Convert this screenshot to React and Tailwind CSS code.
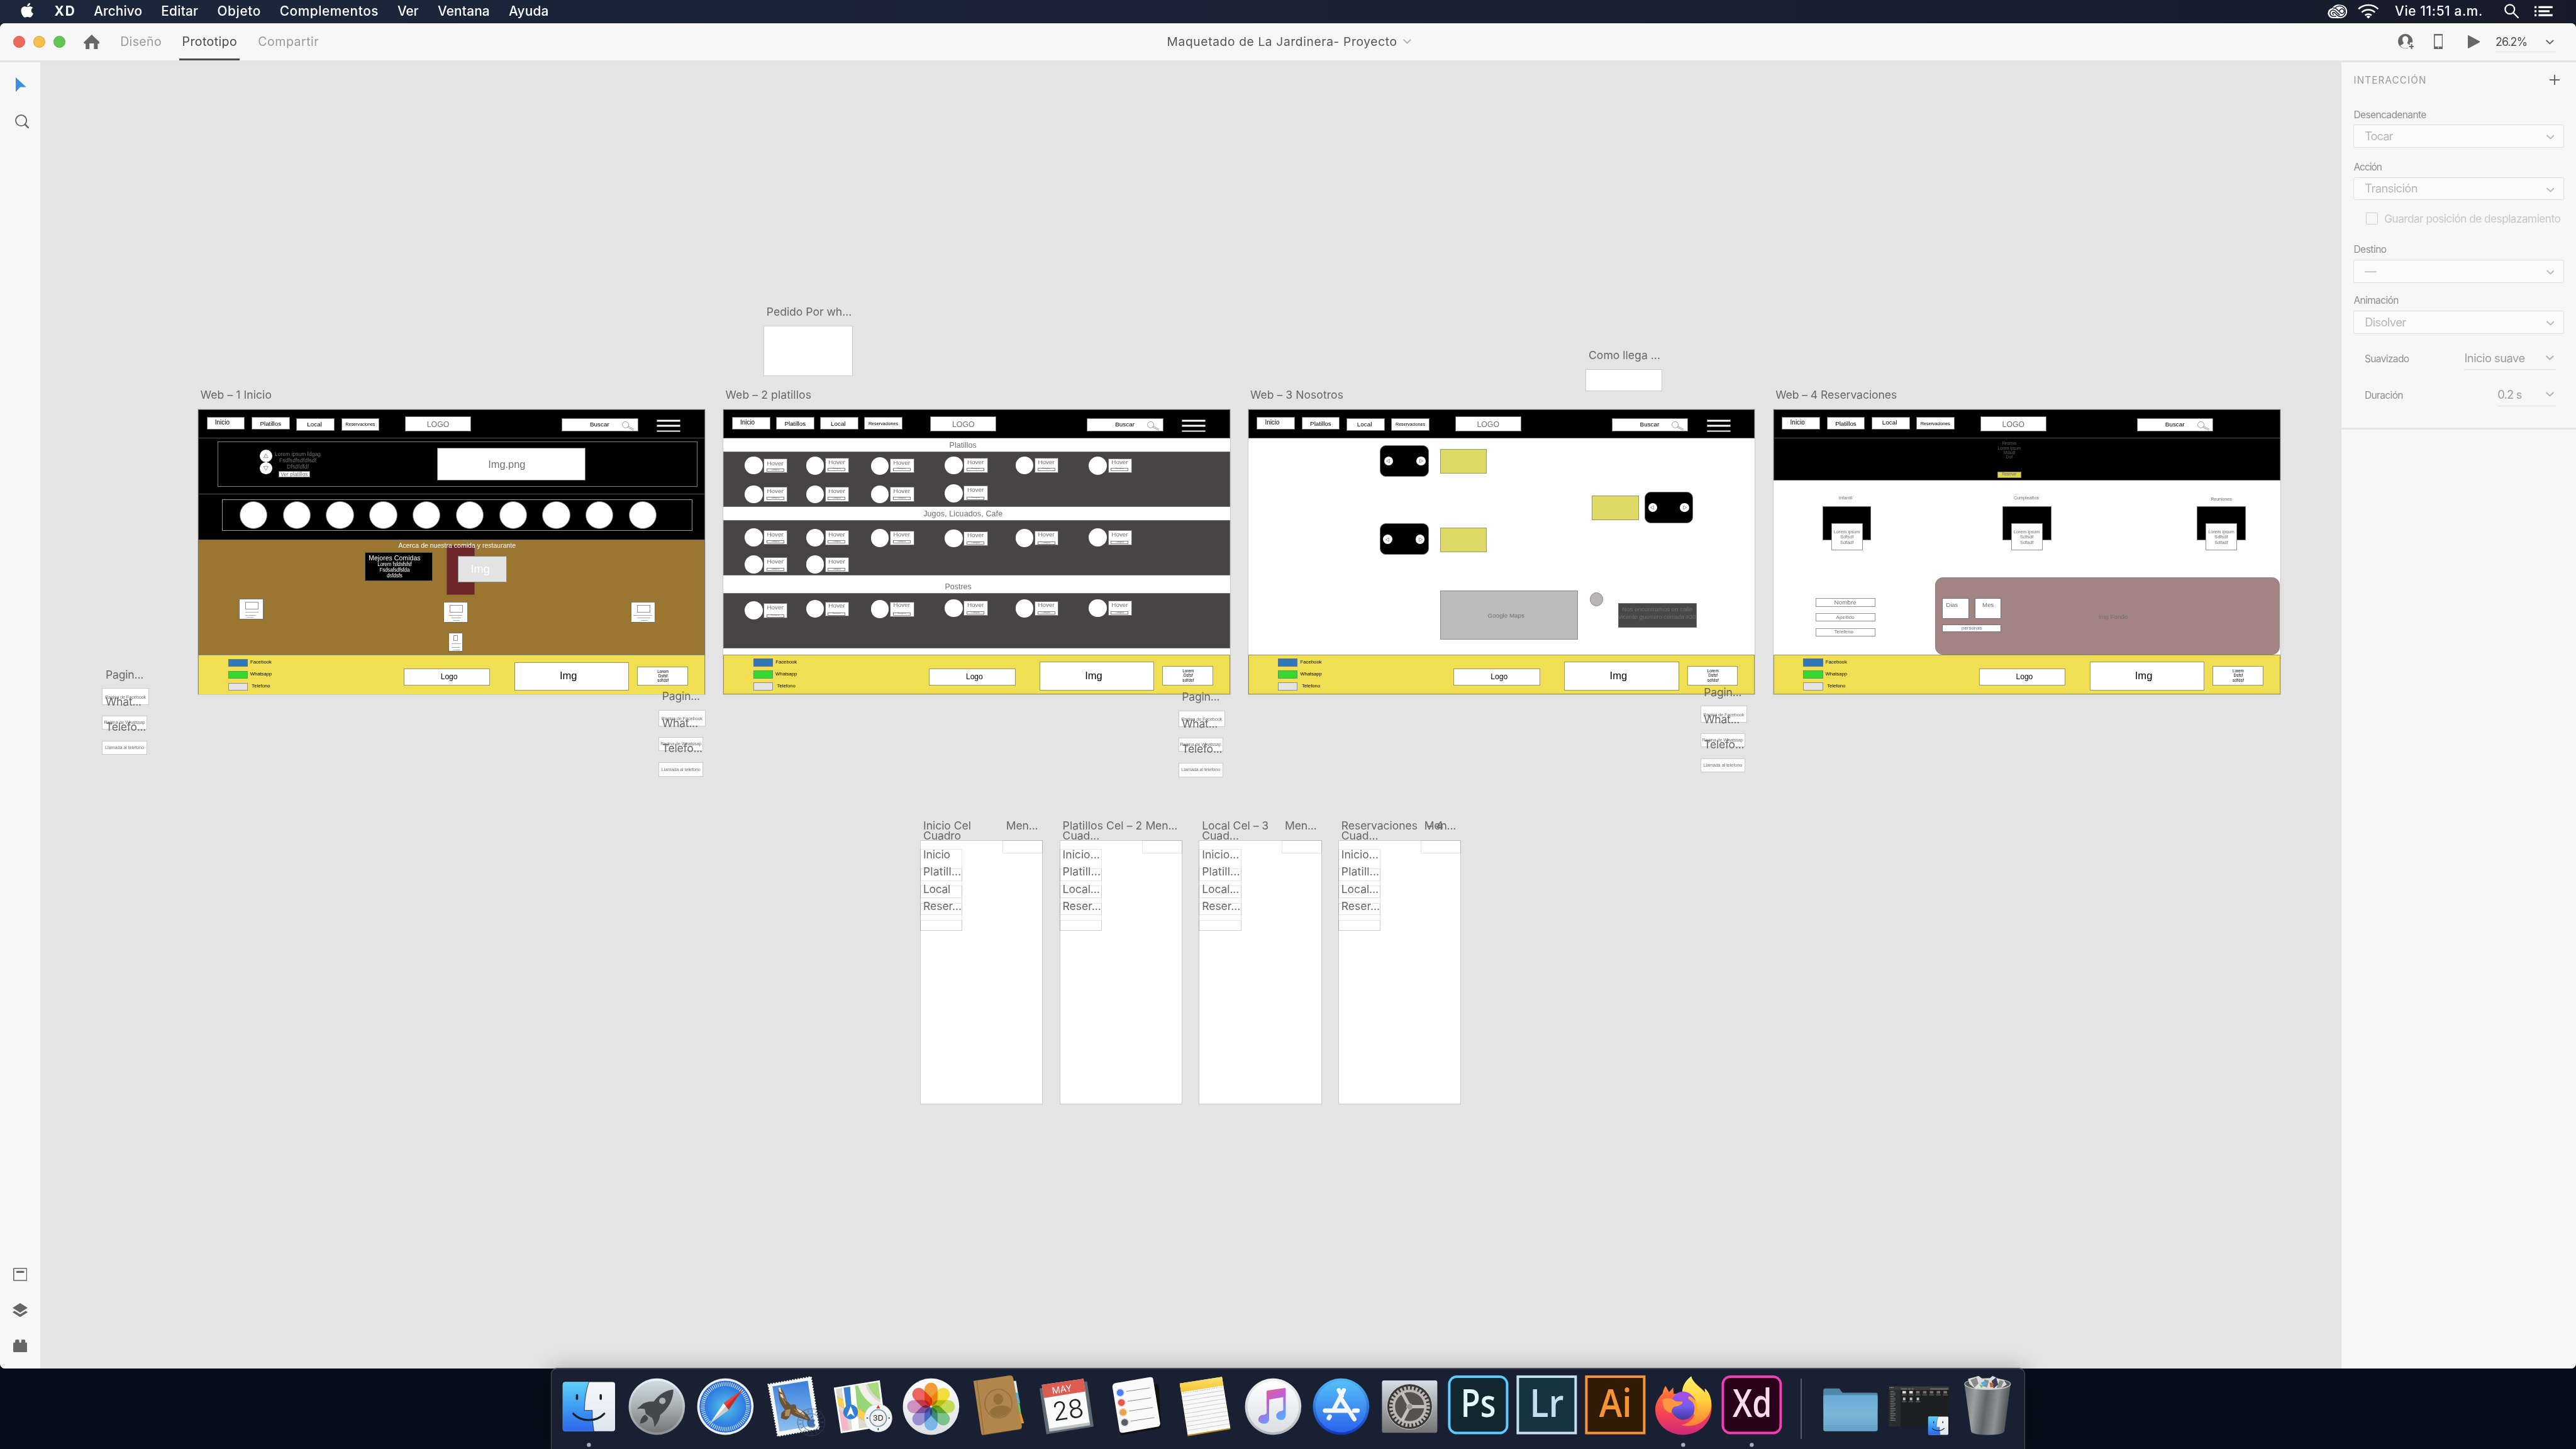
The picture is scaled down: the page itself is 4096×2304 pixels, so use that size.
import React from "react";
import { FaApple } from "react-icons/fa";

/* ---------- text helpers ---------- */

const SANS = '"Inter", sans-serif';
const ARIAL = '"Liberation Sans", Arial, sans-serif';
const ctx = document.createElement("canvas").getContext("2d");

function tracking(text, size, width, family, weight) {
  if (!width || text.length < 2) return 0;
  ctx.font = `${weight} ${size}px ${family}`;
  return (width - ctx.measureText(text).width) / (text.length - 1);
}

/* UI text that takes exactly `w` pixels in the flow */
function Label({ children, w, size = 24, weight = 400, className = "" }) {
  return (
    <span
      className={`block shrink-0 whitespace-nowrap leading-none ${className}`}
      style={{ width: w, fontSize: size, fontWeight: weight, letterSpacing: tracking(children, size, w, SANS, weight) }}
    >
      {children}
    </span>
  );
}

/* Wireframe text in the flow */
function Copy({ w, s, children, className = "text-[#707070]" }) {
  return (
    <span
      className={`block shrink-0 whitespace-nowrap font-['Liberation_Sans',Arial,sans-serif] leading-none ${className}`}
      style={{ width: w, fontSize: s, letterSpacing: tracking(children, s, w, ARIAL, 400) }}
    >
      {children}
    </span>
  );
}

/* Wireframe text on the free canvas, centred on x and y */
function Txt({ x, y, w, s, children, className = "text-[#707070]" }) {
  const ls = tracking(children, s, w, ARIAL, 400);
  return (
    <span
      className={`absolute whitespace-nowrap font-['Liberation_Sans',Arial,sans-serif] leading-none -translate-x-1/2 -translate-y-1/2 ${className}`}
      style={{ left: x + ls / 2, top: y, fontSize: s, letterSpacing: ls }}
    >
      {children}
    </span>
  );
}

/* Artboard name, left edge at x, centred on y */
function Name({ x, y, w, children }) {
  return (
    <span
      className="absolute whitespace-nowrap leading-none text-[#666] -translate-y-1/2"
      style={{ left: x, top: y, fontSize: 22, letterSpacing: tracking(children, 22, w, SANS, 400) }}
    >
      {children}
    </span>
  );
}

function Box({ x, y, w, h, className = "border border-[#707070] bg-white", children }) {
  return (
    <div className={`absolute ${className}`} style={{ left: x, top: y, width: w, height: h }}>
      {children}
    </div>
  );
}

function Disc({ x, y, r, className = "bg-white" }) {
  return <div className={`absolute rounded-full ${className}`} style={{ left: x - r, top: y - r, width: 2 * r, height: 2 * r }} />;
}

function Chevron({ className = "text-[#b0b0b0]" }) {
  return (
    <svg viewBox="0 0 16 10" className={`h-[10px] w-[16px] shrink-0 ${className}`} fill="none" stroke="currentColor" strokeWidth="2.6" strokeLinecap="round">
      <path d="M1.5 2 8 8l6.500-6" />
    </svg>
  );
}

/* ---------- artboards ---------- */

function Artboard({ x, children }) {
  return (
    <div className="absolute top-[690px] flex h-[566.5px] w-[1007px] flex-col bg-white outline-2 outline-[#c8c8c8]" style={{ left: x }}>
      {children}
    </div>
  );
}

const navBtn = "flex h-[24.5px] w-[76px] shrink-0 items-center justify-center border border-[#707070] bg-white";

function NavBar({ group = "w-[343.5px]", low = [true, true], localText = "", burger = true }) {
  return (
    <nav className="flex h-[57px] shrink-0 items-start border border-[#555] bg-black pl-[15.5px] pt-[12.5px]">
      <div className="w-[394.5px] pt-[1.5px]">
        <div className={`flex items-start justify-between ${group}`}>
          <div className={`${navBtn} pb-[2px] pr-[14px]`}><Copy w={29} s={12.5} className="text-black">Inicio</Copy></div>
          <div className={`${navBtn} pt-[3px]`}><Copy w={42} s={12.3} className="text-black">Platillos</Copy></div>
          <div className={`${navBtn} pr-[4px] ${low[0] ? "mt-[2px]" : ""} ${localText}`}><Copy w={29.5} s={12.3} className="text-black">Local</Copy></div>
          <div className={`${navBtn} ${low[1] ? "mt-[2px]" : ""}`}><Copy w={59} s={9.1} className="text-black">Reservaciones</Copy></div>
        </div>
      </div>
      <div className="flex h-[30px] w-[131px] items-center justify-center border border-[#707070] bg-white pt-[2px]">
        <Copy w={44.5} s={15.4}>LOGO</Copy>
      </div>
      <div className="ml-[180px] mt-[4px] flex h-[26px] w-[152px] items-center border border-[#707070] bg-white pl-[55px]">
        <Copy w={38.5} s={12.4} className="-mt-[2px] text-black">Buscar</Copy>
        <svg viewBox="0 0 26 20" className="ml-[25px] mt-[3px] h-[20px] w-[26px]" fill="none" stroke="#707070" strokeWidth=".9">
          <circle cx="7" cy="8" r="6.2" />
          <path d="M11 13 23 19M12.500 11 24 17" />
        </svg>
      </div>
      {burger && (
        <div className="ml-[37px] mt-[6px] flex flex-col gap-[5.9px]">
          <i className="h-[4.6px] w-[47.5px] border border-[#777] bg-white" />
          <i className="h-[4.6px] w-[47.5px] border border-[#777] bg-white" />
          <i className="h-[4.6px] w-[47.5px] border border-[#777] bg-white" />
        </div>
      )}
    </nav>
  );
}

function Social({ children, w, swatch }) {
  return (
    <div className="flex items-center">
      <i className={`h-[15.5px] w-[39px] border ${swatch}`} />
      <div className="-mt-[3px] ml-[5px] flex w-[43px] justify-center"><Copy w={w} s={9.6} className="text-black">{children}</Copy></div>
    </div>
  );
}

const plate = "flex shrink-0 items-center justify-center border border-[#9a9466] bg-white";

function Footer() {
  return (
    <footer className="mt-auto flex h-[79.5px] shrink-0 items-start border border-[#9a9358] bg-[#f0df52] pl-[58px]">
      <div className="flex w-[349px] flex-col gap-[8.3px] pt-[7px]">
        <Social w={42.5} swatch="border-[#707070]/70 bg-[#3278b8]">Facebook</Social>
        <Social w={43} swatch="border-[#707070]/60 bg-[#37d931]">Whatsapp</Social>
        <Social w={36.5} swatch="border-[#909090] bg-[#e3e3e3]">Telefono</Social>
      </div>
      <div className={`${plate} mt-[26px] h-[34px] w-[172px] pl-[9px]`}><Copy w={33.5} s={15.2} className="text-black">Logo</Copy></div>
      <div className={`${plate} ml-[48px] mt-[13px] h-[57px] w-[228px] pr-[13px]`}><Copy w={34.5} s={20.7} className="text-black">Img</Copy></div>
      <div className={`${plate} ml-[16px] mt-[22px] h-[38px] w-[101px] flex-col gap-px pl-[2px]`}>
        <Copy w={22.5} s={8} className="text-black">Lorem</Copy>
        <Copy w={18.5} s={8} className="text-black">Dsfsf</Copy>
        <Copy w={22.5} s={8} className="text-black">sdfdsf</Copy>
      </div>
    </footer>
  );
}

function Card({ x, y, w, h, pic, lines }) {
  return (
    <Box x={x} y={y} w={w} h={h} className="border border-[#707070] bg-white">
      <Box x={pic[0] - x - 1} y={pic[1] - y - 1} w={pic[2]} h={pic[3]} className="border border-[#909090]" />
      {lines.map(([lx, ly, lw]) => (
        <Box key={ly} x={lx - x - 1} y={ly - y - 1} w={lw} h={1.3} className="bg-[#a8a8a8]" />
      ))}
    </Box>
  );
}

function BoardInicio() {
  return (
    <Artboard x={314}>
      <NavBar />
      <section className="h-[112px] shrink-0 border-x border-b border-[#555] bg-black pl-[37.5px] pt-[6px]">
        <div className="flex h-[90px] w-[953px] items-start border border-[#808080] pl-[82.3px]">
          <div className="mt-[15.5px] flex flex-col">
            <div className="flex size-[24.6px] items-center justify-center rounded-full bg-white">
              <svg viewBox="0 0 12 12" className="size-[12px]" fill="none" stroke="#707070" strokeWidth=".9"><path d="M6 2 10.500 9.800H1.500Z" /></svg>
            </div>
            <div className="flex size-[24.6px] items-center justify-center rounded-full bg-white">
              <svg viewBox="0 0 12 12" className="size-[12px]" fill="none" stroke="#707070" strokeWidth=".9"><path d="M6 10 10.500 2.200H1.500Z" /></svg>
            </div>
          </div>
          <div className="ml-[4.5px] mt-[19.5px] flex w-[93px] flex-col items-center gap-[1.9px]">
            <Copy w={91} s={10.6}>Lorem ipsum fdgag</Copy>
            <Copy w={74} s={10.6}>Fsdfsdfsdfdfsdf</Copy>
            <Copy w={44} s={10.6}>Dfsdfdfdf</Copy>
            <div className="mt-px -ml-[14px] flex h-[13px] w-[63px] items-center justify-center border border-[#707070] bg-white"><Copy w={54} s={10.4}>Ver platillos</Copy></div>
          </div>
          <div className="ml-[231px] mt-[11.5px] flex h-[65.5px] w-[294px] items-center justify-center border border-[#707070] bg-white pr-[18px]">
            <Copy w={74} s={20.5}>Img.png</Copy>
          </div>
        </div>
      </section>
      <section className="h-[90px] shrink-0 border-x border-[#555] bg-black pl-[46.5px] pt-[10px]">
        <div className="flex h-[61.5px] w-[934.5px] items-center gap-[30.6px] border border-[#999] pl-[33.2px]">
          {Array.from({ length: 10 }, (_, i) => <i key={i} className="size-[55.4px] shrink-0 rounded-full border border-[#707070] bg-white" />)}
        </div>
      </section>
      <section className="h-[228.5px] shrink-0 border border-[#707070] bg-[#9a7631]">
        <Box x={494} y={270} w={56} h={98.5} className="border border-[#7a4a3a] bg-[#6e2527]" />
        <Txt x={514.5} y={271} w={233.5} s={13.1} className="text-white">Acerca de nuestra comida y restaurante</Txt>
        <Box x={331} y={283} w={134.5} h={58} className="flex flex-col items-center border border-[#606060] bg-black pr-[16px] pt-[5px]">
          <Copy w={103} s={13.1} className="text-white">Mejores Comidas</Copy>
          <Copy w={68} s={10.2} className="mt-px text-white">Lorem fsfdsfsfsf</Copy>
          <Copy w={60} s={10.2} className="mt-[1.3px] text-white">Fsdsafsdfsfda</Copy>
          <Copy w={31} s={10.2} className="mt-[1.6px] text-white">dsfdsfs</Copy>
        </Box>
        <Box x={516} y={290.5} w={98} h={53.5} className="flex items-center justify-center border border-[#888] bg-[#e3e3e3] pr-[9px]">
          <Copy w={38} s={22.7} className="text-white">Img</Copy>
        </Box>
        <Card x={81} y={376} w={49} h={41.5} pic={[92.8, 382, 26.5, 15.5]} lines={[[92.8, 402.5, 26.5], [92.8, 408, 22], [97.5, 412.5, 12]]} />
        <Card x={487.5} y={382} w={48} h={41.5} pic={[499.4, 388, 26, 15.5]} lines={[[496.7, 408, 28], [503.4, 412.7, 18.6], [507.4, 418, 12]]} />
        <Card x={860} y={382} w={48.6} h={41.5} pic={[872, 388, 26, 15.5]} lines={[[865, 408, 37], [872, 412.7, 26], [879.5, 418, 14]]} />
        <Card x={496.7} y={443} w={29} h={38.5} pic={[507.4, 448, 8.6, 11]} lines={[[503.4, 464.5, 18.6], [503.4, 472, 16], [507.4, 477, 12]]} />
      </section>
      <Footer />
    </Artboard>
  );
}

const colDisc = [60.1, 181.8, 310.9, 457.6, 598.2, 744.2];
const colCard = [79.1, 201.4, 330.5, 477.2, 617.8, 763.9];
/* column, disc centre, card top, "Hover" centre, "Comprar" centre */
const dishes = [
  [0, 111.1, 97.1, 107.5, 120.4], [1, 111.6, 96.6, 104.9, 118.8], [2, 112.1, 97.1, 105.9, 118.8],
  [3, 111.1, 96.1, 104.9, 118.8], [4, 111.1, 96.1, 104.9, 118.8], [5, 111.6, 97.1, 104.9, 118.8],
  [0, 168.4, 153.4, 162.2, 176.7], [1, 168.4, 153.4, 162.2, 176.7], [2, 168.4, 153.4, 162.2, 176.7], [3, 166.3, 151.4, 160.1, 176.2],
  [0, 254.2, 239.2, 248, 263], [1, 254.7, 240.2, 248, 263], [2, 255.2, 240.7, 249, 263],
  [3, 256.2, 241.8, 250, 265.5], [4, 255.2, 240.7, 249, 265.5], [5, 254.2, 239.7, 248, 264.5],
  [0, 307.9, 294, 302.2, 318.2], [1, 307.9, 294, 302.2, 318.2],
  [0, 399.3, 384.9, 393.1, 410.2], [1, 396.2, 381.8, 390, 406.6], [2, 396.8, 382.3, 389, 406.6],
  [3, 394.7, 380.2, 389, 404.5], [4, 395.2, 380.7, 389, 404.5], [5, 394.7, 380.2, 389, 404.5],
];

const band = "shrink-0 border border-[#707070] bg-[#464445]";

function BoardPlatillos() {
  return (
    <Artboard x={1358}>
      <NavBar group="w-[339px]" low={[false, false]} localText="pt-[3px]" />
      <div className="flex h-[26px] shrink-0 items-center justify-center pr-[55px] pt-[2px]"><Copy w={54} s={15.6}>Platillos</Copy></div>
      <div className={`h-[110px] ${band}`} />
      <div className="flex h-[26.5px] shrink-0 items-center justify-center pr-[55px] pt-[3px]"><Copy w={157.5} s={15.6}>Jugos, Licuados, Cafe</Copy></div>
      <div className={`h-[110.5px] ${band}`} />
      <div className="flex h-[34.5px] shrink-0 items-center justify-center pr-[74px] pt-[11px]"><Copy w={53} s={15.6}>Postres</Copy></div>
      <div className={`h-[110px] ${band}`} />
      {dishes.map(([c, cy, top, hy, by], i) => (
        <React.Fragment key={i}>
          <Disc x={colDisc[c]} y={cy} r={17.9} />
          <Box x={colCard[c]} y={top} w={48.5} h={29.5} />
          <Txt x={colCard[c] + 23.7} y={hy} w={33} s={12.4}>Hover</Txt>
          <Box x={colCard[c] + 6.2} y={by - 3} w={35} h={6} className="border border-[#808080]" />
          <Txt x={colCard[c] + 23.7} y={by} w={17.5} s={4.5}>Comprar</Txt>
        </React.Fragment>
      ))}
      <Footer />
    </Artboard>
  );
}

function Slider({ x, y, pad }) {
  return (
    <Box x={x} y={y} w={97} h={62} className={`flex items-center justify-between rounded-[12px] border border-[#707070] bg-black ${pad}`}>
      <div className="flex size-[18px] items-center justify-center rounded-full bg-white">
        <svg viewBox="0 0 10 10" className="-ml-[2px] size-[10px]" fill="none" stroke="#707070" strokeWidth=".9"><path d="M1.500 5 8 1.500v7Z" /></svg>
      </div>
      <div className="flex size-[18px] items-center justify-center rounded-full bg-white">
        <svg viewBox="0 0 10 10" className="ml-[2px] size-[10px]" fill="none" stroke="#707070" strokeWidth=".9"><path d="M8.500 5 2 1.500v7Z" /></svg>
      </div>
    </Box>
  );
}

function BoardNosotros() {
  return (
    <Artboard x={2401}>
      <NavBar />
      <Slider x={262} y={71.5} pad="pl-[7px] pr-[5.5px]" />
      <Box x={381} y={78.5} w={93} h={49} className="border border-[#99985c] bg-[#dddb66]" />
      <Slider x={787.5} y={164} pad="pl-[6px] pr-[7px]" />
      <Box x={683} y={171} w={93.5} h={48.5} className="border border-[#99985c] bg-[#dddb66]" />
      <Slider x={262} y={226} pad="pl-[5px] pr-[7px] pt-[2px]" />
      <Box x={381} y={234.5} w={93} h={48.5} className="border border-[#99985c] bg-[#dddb66]" />
      <Box x={381} y={360} w={274} h={97.5} className="flex items-center justify-center border border-[#8c8c8c] bg-[#bbb] pr-[11px] pt-[2px]">
        <Copy w={73} s={12.3}>Google Maps</Copy>
      </Box>
      <Disc x={692.2} y={377} r={13.5} className="border border-[#858585] bg-[#b9b5b4]" />
      <Box x={735} y={384.5} w={156} h={48.5} className="flex flex-col items-center gap-[2.6px] border border-[#707070] bg-[#474747] pt-[5px]">
        <Copy w={140.5} s={12.4}>Nos encontramos en calle</Copy>
        <Copy w={154} s={12.4}>vicente guerrero cerrada #30</Copy>
      </Box>
      <Footer />
    </Artboard>
  );
}

const field = "flex w-[118.5px] items-center justify-center border border-[#909090] bg-white";

function BoardReservaciones() {
  return (
    <Artboard x={3445}>
      <NavBar group="w-[343px]" low={[false, false]} localText="pb-[2px]" burger={false} />
      <section className="flex h-[84.5px] shrink-0 flex-col items-center gap-px border border-t-0 border-[#555] bg-black pr-[70px] pt-[7px]">
        <Copy w={28.5} s={8} className="text-[#606060]">Reserva</Copy>
        <Copy w={46} s={8} className="text-[#606060]">Lorem ipsum</Copy>
        <Copy w={24} s={8} className="text-[#606060]">Sfdsdf</Copy>
        <Copy w={13} s={8} className="text-[#606060]">Duf</Copy>
        <div className="mt-[23px] flex h-[12.5px] w-[48px] items-center justify-center border border-[#8c8745] bg-[#ddd352]"><Copy w={29} s={8}>Reservar</Copy></div>
      </section>
      <Txt x={143} y={176} w={27} s={9.1}>Infantil</Txt>
      <Txt x={502.6} y={176} w={50.5} s={9.1}>Cumpleaños</Txt>
      <Txt x={890} y={178} w={42} s={9.1}>Reuniones</Txt>
      {[97, 454.6, 841.3].map((x) => (
        <React.Fragment key={x}>
          <Box x={x} y={192.7} w={97.3} h={67} className="border border-[#707070] bg-black" />
          <Box x={x + 17.5} y={226} w={62.5} h={53.5} className="flex flex-col items-center gap-[1.2px] border border-[#909090] bg-white pt-[11.5px]">
            <Copy w={52} s={9.1}>Lorem ipsum</Copy>
            <Copy w={26.5} s={9.1}>Sdfsdf</Copy>
            <Copy w={26.5} s={9.1}>Sdfadf</Copy>
          </Box>
        </React.Fragment>
      ))}
      <Box x={83.5} y={374.7} w={118.5} h={76} className="flex flex-col justify-between">
        <div className={`${field} h-[17px]`}><Copy w={44} s={12.3}>Nombre</Copy></div>
        <div className={`${field} h-[17px] pt-[2px]`}><Copy w={36.5} s={10}>Apellido</Copy></div>
        <div className={`${field} h-[16.5px] pr-[6px]`}><Copy w={38} s={9.9}>Telefeno</Copy></div>
      </Box>
      <Box x={320.7} y={333.5} w={686} h={153.5} className="rounded-[15px] border border-[#8d8382] bg-[#a38482]" />
      <Box x={335.6} y={375} w={53} h={41.5} className="border border-[#707070] bg-white pl-[6px] pt-[6px]"><Copy w={23.7} s={12.2}>Dias</Copy></Box>
      <Box x={399.8} y={375} w={53} h={41.5} className="border border-[#707070] bg-white pl-[14px] pt-[6px]"><Copy w={23} s={12}>Mes</Copy></Box>
      <Box x={335.6} y={427.5} w={117} h={15} className="flex items-center justify-center border border-[#707070] bg-white"><Copy w={40.6} s={9.7}>personas</Copy></Box>
      <Txt x={675} y={412.7} w={58} s={12.3}>Img Fondo</Txt>
      <Footer />
    </Artboard>
  );
}

function ContactBoards({ x, y }) {
  const frame = "flex items-center justify-center border-2 border-[#cacaca] bg-white";
  return (
    <div className="absolute flex flex-col" style={{ left: x, top: y }}>
      <div className={`h-[33px] w-[93px] pt-[2px] ${frame}`}><Copy w={81.5} s={9.4}>Pagina de Facebook</Copy></div>
      <div className={`mt-[21px] h-[28px] w-[89px] ${frame}`}><Copy w={81.5} s={9.2}>Pagina de Whatssap</Copy></div>
      <div className={`mt-[22px] h-[28.5px] w-[89px] ${frame}`}><Copy w={77.5} s={9.2}>Llamada al telefono</Copy></div>
      <Name x={7} y={-27} w={75.5}>Pagin...</Name>
      <Name x={7} y={27} w={71.5}>What...</Name>
      <Name x={7} y={77} w={80.5}>Telefo...</Name>
    </div>
  );
}

function PhoneBoard({ x, title, titleW, sub, subW, items, extra }) {
  return (
    <div className="absolute top-[1545.5px]" style={{ left: x }}>
      <Name x={6} y={-28} w={titleW}>{title}</Name>
      {extra && <Name x={176.5} y={-28} w={32}>{extra}</Name>}
      <Name x={6} y={-8.5} w={subW}>{sub}</Name>
      <Name x={170.8} y={-28} w={63.5}>Men...</Name>
      <Box x={0} y={0} w={244} h={526} className="border-2 border-[#cbcbcb] bg-white" />
      <Box x={164} y={0} w={80} h={27} className="border-2 border-black/10" />
      <Box x={0} y={18} w={84} h={163} className="border-2 border-black/10" />
      {[57, 91, 125, 159].map((y, i) => (
        <Box key={y} x={0} y={y} w={84} h={i === 3 ? 22 : 24.5} className="border-2 border-black/10" />
      ))}
      {items.map(([t, w], i) => (
        <Name key={t} x={6} y={29.5 + i * 34} w={w}>{t}</Name>
      ))}
    </div>
  );
}

const phoneItems = [["Inicio...", 74], ["Platill...", 75.5], ["Local...", 74], ["Reser...", 76.5]];

function Canvas() {
  return (
    <main className="relative flex-1 overflow-hidden bg-[#e4e4e4]">
      <Name x={318.5} y={660.5} w={141.5}>Web – 1 Inicio</Name>
      <Name x={1362} y={660.5} w={170.5}>Web – 2 platillos</Name>
      <Name x={2405} y={660.5} w={185}>Web – 3 Nosotros</Name>
      <Name x={3449} y={660.5} w={241.5}>Web – 4 Reservaciones</Name>
      <Name x={1443.5} y={495.5} w={169.5}>Pedido Por wh...</Name>
      <Box x={1437} y={523} w={178} h={101} className="border-2 border-[#cbcbcb] bg-white" />
      <Name x={3077.5} y={582.5} w={142.5}>Como llega ...</Name>
      <Box x={3071.5} y={610} w={152} h={43.5} className="border-2 border-[#cbcbcb] bg-white" />
      <BoardInicio />
      <BoardPlatillos />
      <BoardNosotros />
      <BoardReservaciones />
      <ContactBoards x={123} y={1244} />
      <ContactBoards x={1229} y={1287} />
      <ContactBoards x={2262} y={1288} />
      <ContactBoards x={3299.5} y={1279} />
      <PhoneBoard x={1749} title="Inicio Cel" titleW={95} sub="Cuadro" subW={75} items={[["Inicio", 54], ["Platill...", 75.5], ["Local", 54], ["Reser...", 76.5]]} />
      <PhoneBoard x={2026} title="Platillos Cel – 2" titleW={158.5} sub="Cuad..." subW={73.5} items={phoneItems} />
      <PhoneBoard x={2303} title="Local Cel – 3" titleW={132.5} sub="Cuad..." subW={73.5} items={phoneItems} />
      <PhoneBoard x={2580} title="Reservaciones" titleW={151.5} extra="– 4" sub="Cuad..." subW={73.5} items={phoneItems} />
    </main>
  );
}

/* ---------- system menu bar ---------- */

function MenuBar() {
  return (
    <header className="flex h-[46px] shrink-0 items-center bg-linear-to-r from-[#1c273e] to-[#161c2c] text-white">
      <FaApple className="-mt-[5px] ml-[38px] size-[33px] shrink-0" />
      <nav className="ml-[37px] flex items-center gap-[38px] pb-px">
        <Label w={40.5} size={26} weight={700}>XD</Label>
        <Label w={96} size={26} weight={500}>Archivo</Label>
        <Label w={73.5} size={26} weight={500}>Editar</Label>
        <Label w={86} size={26} weight={500}>Objeto</Label>
        <Label w={196} size={26} weight={500}>Complementos</Label>
        <Label w={42} size={26} weight={500}>Ver</Label>
        <Label w={103.5} size={26} weight={500}>Ventana</Label>
        <Label w={79} size={26} weight={500}>Ayuda</Label>
      </nav>
      <div className="ml-auto flex items-center pb-px pr-[46px]">
        <svg viewBox="0 0 39 28" className="h-[28px] w-[39px]">
          <path fill="#fff" d="M10.500 27.500A10 10 0 0 1 9 7.600 14.500 14.500 0 0 1 24.500.5C33 .5 39 6.500 39 14S33 27.500 25.500 27.500Z" />
          <g fill="none" stroke="#171d2e" strokeWidth="1.900" strokeLinecap="round">
            <path d="M16.500 23.800H11a6.300 6.300 0 1 1 4.500-10.700l8 7.700" />
            <path d="M11.500 7.200c3-.3 5 .8 7 2.700l8 7.600a4.500 4.500 0 1 0-1-7.300c-.8.700-1.500 1.500-2 2.300" />
            <path d="M15.500 6.300C18 4 21 3.200 24 3.200c6.500 0 11.500 4.500 11.500 10.500S31 24.300 25.500 24.300c-2.500 0-4-.8-5.500-2.300l-6-5.500a2.200 2.200 0 1 0-2.500 3.400" />
          </g>
        </svg>
        <svg viewBox="0 0 42 30" className="ml-[21px] h-[30px] w-[42px]" fill="none" stroke="#fff" strokeWidth="3.200">
          <path d="M1.500 10.500a28 28 0 0 1 39 0M8 17a19 19 0 0 1 26 0M14.500 23a10 10 0 0 1 13 0" />
          <path d="m21 29.500-4-4a6 6 0 0 1 8 0Z" fill="#fff" stroke="none" />
        </svg>
        <Label w={174} size={26} weight={500} className="ml-[32px]">Vie 11:51 a.m.</Label>
        <svg viewBox="0 0 29 29" className="ml-[44px] size-[29px]" fill="none" stroke="#fff" strokeWidth="2.800">
          <circle cx="11" cy="11" r="9.300" />
          <path d="m18 18 9.500 9.500" strokeLinecap="round" />
        </svg>
        <svg viewBox="0 0 36 22" className="ml-[31px] h-[22px] w-[36px]" fill="#fff">
          <path d="M0 1h4v4H0zM0 9h4v4H0zM0 17h4v4H0zM8 1h28v4H8zM8 9h22v4H8zM8 17h28v4H8z" />
        </svg>
      </div>
    </header>
  );
}

/* ---------- application window ---------- */

function TitleBar() {
  return (
    <div className="grid h-[78px] shrink-0 grid-cols-[1fr_auto_1fr] items-stretch border-b-4 border-[#e3e3e3] bg-[#f7f7f7]">
      <div className="flex items-center">
        <div className="ml-[26px] flex gap-[16px]">
          <i className="size-[24px] rounded-full border border-[#d9574c] bg-[#ee6a5f]" />
          <i className="size-[24px] rounded-full border border-[#dba33a] bg-[#f5bf4f]" />
          <i className="size-[24px] rounded-full border border-[#4fae40] bg-[#62c655]" />
        </div>
        <svg viewBox="0 0 32 29" className="ml-[36px] h-[29px] w-[32px]" fill="#666">
          <path d="M16 0 32 15.500 30.500 18H28v11h-7.500V17.500h-9V29H4V18H1.500L0 15.500Z" />
        </svg>
        <Label w={82} size={24.5} className="ml-[41px] text-[#999]">Diseño</Label>
        <div className="ml-[35px] flex h-full items-center border-b-4 border-[#4b4b4b] pt-[4px] pl-[6px] pr-[5px]">
          <Label w={109} size={24.5} className="text-[#4b4b4b]">Prototipo</Label>
        </div>
        <Label w={120.5} size={24.5} className="ml-[37px] text-[#999]">Compartir</Label>
      </div>
      <div className="flex items-center gap-[12px] pl-[4px]">
        <Label w={457} size={24} className="text-[#555]">Maquetado de La Jardinera- Proyecto</Label>
        <Chevron />
      </div>
      <div className="flex items-center justify-end pr-[40px]">
        <svg viewBox="0 0 32 31" className="h-[31px] w-[32px]">
          <circle cx="14.500" cy="14.500" r="14.500" fill="#666" />
          <path fill="#f7f7f7" d="M14.500 4.500c4 0 6 3 6 6.500 0 3-1.200 4.500-2 6-.3 1.500.5 2.300 2.500 3.200v6.500a13 13 0 0 1-13.500-.5c-1-.8-2.500-2-3-3 .8-1.300 3.500-2.200 5-3 1.800-1 2-1.700 1.500-3-1-1.500-2.300-3-2.300-6.200 0-3.500 2-6.500 5.800-6.500Z" />
          <path stroke="#f7f7f7" strokeWidth="7" d="M27 17v14M20 25h12" />
          <path stroke="#666" strokeWidth="2.600" d="M27 20v10M22 25h10" />
        </svg>
        <svg viewBox="0 0 18 30" className="ml-[39px] h-[30px] w-[18px]">
          <path fill="#666" fillRule="evenodd" d="M1.500 0h15A1.500 1.500 0 0 1 18 1.500v27a1.500 1.500 0 0 1-1.500 1.500h-15A1.500 1.500 0 0 1 0 28.500v-27A1.500 1.500 0 0 1 1.500 0ZM2 3v22h14V3Zm6 23v2h2v-2Z" />
        </svg>
        <svg viewBox="0 0 24 26" className="ml-[50px] h-[26px] w-[24px]">
          <path fill="#666" d="M1.500.2 23.500 12a1.200 1.200 0 0 1 0 2L1.500 25.800A1 1 0 0 1 0 25V1A1 1 0 0 1 1.500.2Z" />
        </svg>
        <div className="ml-[31px] flex h-[42px] w-[120px] items-center justify-between border-b-2 border-[#e1e1e1] pr-[4px] pt-[2px]">
          <Label w={64} size={22.5} className="text-[#4b4b4b]">26.2%</Label>
          <Chevron className="text-[#666]" />
        </div>
      </div>
    </div>
  );
}

function ToolBar() {
  return (
    <aside className="flex w-[80px] shrink-0 flex-col bg-[#f7f7f7]">
      <svg viewBox="0 0 21 29" className="ml-[31px] mt-[30px] h-[29px] w-[21px]"><path fill="#3f8fe0" d="M0 0 21 19.500H9L0 29Z" /></svg>
      <svg viewBox="0 0 28 28" className="ml-[30px] mt-[44px] size-[28px]" fill="none" stroke="#666" strokeWidth="2.400">
        <circle cx="12" cy="12" r="10.700" />
        <path d="m20 20 6.500 6.500" strokeWidth="3.200" strokeLinecap="round" />
      </svg>
      <div className="mb-[32px] mt-auto flex flex-col items-center">
        <svg viewBox="0 0 28 26" className="h-[26px] w-[28px]" fill="none" stroke="#666">
          <rect x="1" y="1" width="26" height="24" rx="1" strokeWidth="2" />
          <path d="M8 8h12" strokeWidth="4" strokeLinecap="round" />
        </svg>
        <svg viewBox="0 0 30 28" className="mt-[44px] h-[28px] w-[30px]" fill="#666">
          <path d="M15 0 30 9.500 15 19 0 9.500ZM3.800 15.300 15 22.300l11.200-7L30 18 15 28 0 18Z" />
        </svg>
        <svg viewBox="0 0 28 25" className="mt-[45px] h-[25px] w-[28px]" fill="#666">
          <path d="M4 6V2a2 2 0 0 1 2-2h4a2 2 0 0 1 2 2v4h4V2a2 2 0 0 1 2-2h4a2 2 0 0 1 2 2v4h2a2 2 0 0 1 2 2v15a2 2 0 0 1-2 2H2a2 2 0 0 1-2-2V8a2 2 0 0 1 2-2Z" />
        </svg>
      </div>
    </aside>
  );
}

function Select({ children, w }) {
  return (
    <div className="flex h-[46px] w-[418px] items-center justify-between rounded-[4px] border-2 border-[#e0e0e0] bg-[#fbfbfb] pl-[21px] pr-[18px]">
      <Label w={w} size={23} className="-mt-px text-[#b6b6b6]">{children}</Label>
      <Chevron className="mt-[4px] text-[#bdbdbd]" />
    </div>
  );
}

function FieldName({ children, w, className = "" }) {
  return <Label w={w} size={19.5} className={`text-[#8e8e8e] ${className}`}>{children}</Label>;
}

function Inspector() {
  return (
    <aside className="w-[466px] shrink-0 bg-[#f7f7f7]">
      <div className="h-[730px] border-b-4 border-[#e5e5e5] pl-[24px] pr-[24px] pt-[25px]">
        <div className="flex h-[20px] items-center justify-between pr-[8px]">
          <Label w={144} size={19} className="text-[#999]">INTERACCIÓN</Label>
          <svg viewBox="0 0 20 20" className="size-[20px]" stroke="#666" strokeWidth="2.400"><path d="M10 0v20M0 10h20" /></svg>
        </div>
        <FieldName w={145} className="mb-[10px] mt-[49.5px]">Desencadenante</FieldName>
        <Select w={56.5}>Tocar</Select>
        <FieldName w={57} className="mb-[10.5px] mt-[28px]">Acción</FieldName>
        <Select w={105.5}>Transición</Select>
        <div className="mt-[24px] flex h-[24px] items-center pl-[24px]">
          <i className="size-[24px] rounded-[2px] border-2 border-[#ccc]" />
          <Label w={351} size={21.5} className="ml-[13px] text-[#c6c6c6]">Guardar posición de desplazamiento</Label>
        </div>
        <FieldName w={66} className="mb-[10.5px] mt-[40px]">Destino</FieldName>
        <Select w={22}>—</Select>
        <FieldName w={90} className="mb-[10.5px] mt-[26px]">Animación</FieldName>
        <Select w={82.5}>Disolver</Select>
        <div className="mt-[25.5px] flex h-[46px] items-center justify-between pl-[22px] pr-[16px]">
          <FieldName w={89} className="mt-[3px]">Suavizado</FieldName>
          <div className="flex h-full w-[182px] items-center justify-between border-b-2 border-[#e1e1e1] pr-[4px]">
            <Label w={121} size={23} className="text-[#9c9c9c]">Inicio suave</Label>
            <Chevron />
          </div>
        </div>
        <div className="mt-[26px] flex h-[46px] items-center justify-between pl-[22px] pr-[16px]">
          <FieldName w={77} className="mt-[3px]">Duración</FieldName>
          <div className="flex h-full w-[116px] items-center justify-between border-b-2 border-[#e1e1e1] pr-[4px]">
            <Label w={49} size={23} className="text-[#9c9c9c]">0.2 s</Label>
            <Chevron />
          </div>
        </div>
      </div>
    </aside>
  );
}

/* ---------- dock ---------- */

function Grad({ id, stops, x2 = 0, y2 = 1 }) {
  return (
    <linearGradient id={id} x1="0" y1="0" x2={x2} y2={y2}>
      {stops.map((c, i) => <stop key={i} offset={i / (stops.length - 1)} stopColor={c} />)}
    </linearGradient>
  );
}

function FinderFace() {
  return (
    <g>
      <rect x="16" y="28" width="104" height="98" rx="5" fill="url(#finderR)" />
      <path fill="url(#finderL)" d="M21 28H68C62 45 59.500 65 59 83.500c0 .5 0 .8.600.8H74.500C74.500 100 76 113 78 126H21a5 5 0 0 1-5-5V33a5 5 0 0 1 5-5Z" />
      <g fill="none" stroke="#15202c" strokeLinecap="round">
        <path strokeWidth="1.400" strokeOpacity=".7" d="M68 28C62 45 59.500 65 59 84.300H74.500C74.500 100 76 113 78 126" />
        <path strokeWidth="4.500" d="M44.300 54.500v7M91.500 54.500v7" />
        <path strokeWidth="4" d="M37 91c16 17 46 17 61.500 0" />
      </g>
    </g>
  );
}

const dockIcons = {
  finder: <FinderFace />,
  launchpad: (
    <g>
      <circle cx="68" cy="77" r="56" fill="url(#lpRing)" />
      <circle cx="68" cy="77" r="51.500" fill="url(#lpFill)" />
      <g fill="#45484a">
        <path d="M101 43C88 44 73 51 62 67c-9-1-18 2-22 4.500L28 82c6-1.500 11-1 16 0l2 9.500 10 6.500 2.500 1c3 5 4.500 12 4.500 18.500 6-6.500 11-15 11.500-24C91 81 101 62 101 43Z" />
        <path d="M45 93c-7 3-9.500 10-10.500 17.500C42 110 49 107 51 100c-1.500-3-3.500-5-6-7Z" />
      </g>
      <circle cx="79" cy="65.500" r="6.500" fill="#aab3b6" />
    </g>
  ),
  safari: (
    <g>
      <circle cx="68" cy="77" r="56" fill="#eceff2" />
      <circle cx="68" cy="77" r="51.500" fill="url(#sfFill)" />
      <circle cx="68" cy="77" r="45" fill="none" stroke="#fff" strokeOpacity=".85" strokeWidth="8" strokeDasharray="1.500 2.430" />
      <path fill="#e8453c" d="M102.700 42.300 64.400 70.300l5 6.500Z" />
      <path fill="#c32f29" d="M102.700 42.300 69 76.600l5.600 7.100Z" />
      <path fill="#f4f4f4" d="M36.400 112 64.400 70.300l5 6.500Z" />
      <path fill="#c8ccd0" d="M36.400 112 69 76.600l5.600 7.100Z" />
    </g>
  ),
  mail: (
    <g>
      <path fill="#f6f6f4" stroke="#f6f6f4" strokeWidth="3.500" strokeDasharray="0 5.500" strokeLinecap="round" d="m17 33 85-15 16 103-82 14.500Z" />
      <path fill="url(#mailSky)" d="m25.400 37 70-11.300 14.200 88.600-70.200 12.400Z" />
      <path fill="#6b5237" d="M37 39c4-1 8 4 10 9l4 9 3 9 8 8c4-2 8-2 10 1l1 5c7 2 15 6 21 12l7 10-3 3-7-2-13-4-10-4-6-4c-2 6-5 10-9 12l-6-1-5-2 1-10 7-7c-4-5-9-12-11-20-1-8-2-16-2-24Z" />
      <path fill="#e4d9c4" d="m37 39 4 0 3 11-5-3ZM40 51l5 2 3 8-6-3ZM72 80l11 5 8 9-12-5Z" />
      <path fill="#b08d5c" d="m51 84 10-2-2 14-9 0Z" />
      <path fill="none" stroke="#a58a62" strokeWidth="1.500" d="m43 46 9 20M43 58l9 14M68 82l24 15M71 88l24 13" />
      <g fill="none" stroke="#3c4c66" strokeOpacity=".55" strokeWidth="1.600">
        <circle cx="102.500" cy="108" r="27" /><circle cx="102.500" cy="108" r="17" />
        <circle cx="102.500" cy="108" r="22" strokeWidth="5" strokeDasharray="2 6" />
      </g>
      <path fill="#2d4e8c" fillOpacity=".7" d="M102 101c2-1 4-4 4-6-3 0-5 3-4 6Zm-8 6c0-5 4-6 8-4 4-2 8 0 8 2-4 2-3 7 1 8-2 5-4 7-9 5-5 2-8-4-8-11Z" />
    </g>
  ),
  maps: (
    <g>
      <path fill="#fff" d="m11 39.300 91.400-14.600L114 116l-89 14Z" />
      <clipPath id="mapClip"><path d="M15 42 99 28.500 110 113 28 126Z" /></clipPath>
      <g clipPath="url(#mapClip)">
        <path fill="#dcd9d0" d="M0 0h136v161H0z" />
        <path fill="#96d676" d="M48 20h20c4 34 20 50 50 60v46H96C70 112 48 70 48 20Z" />
        <path fill="#a6db80" d="M74 20h45v48C96 66 80 44 74 20Z" />
        <path fill="#f1efe8" d="M56 20h15c4 30 20 46 46 54v12C82 78 60 52 56 20Z" />
        <path fill="#f5b7c5" d="m17 80 18 10 8 40H22Z" />
        <path fill="#fff" d="m38 20 14 0 10 110H48Z" />
        <path fill="#fbd04f" stroke="#e3b23c" d="m14 55 50 28 60 44-8 10-56-40-46-27Z" />
        <path fill="#3b83d4" d="m28 20 14-2 5 70H37Z" />
        <path stroke="#fff" strokeWidth="3" d="m26 20 9 70M45 20l6 70" />
      </g>
      <circle cx="44.500" cy="87.700" r="14.500" fill="#2f7fd9" />
      <path fill="#fff" d="m44.500 76 8 21-8-6-8 6Z" />
      <circle cx="99.200" cy="99.700" r="27.500" fill="#f4f5f6" stroke="#d0d4d8" />
      <circle cx="99.200" cy="99.700" r="16.500" fill="none" stroke="#6c93ad" strokeWidth="2" />
      <path fill="#e0332a" d="m99.200 74 4 6.500h-8Z" />
      <path stroke="#222" strokeWidth="1.800" d="M76 99.700h3M119.500 99.700h3M99.200 120v4" />
      <text x="99.200" y="105.500" textAnchor="middle" fontSize="15.500" fill="#222" fontFamily="Inter, sans-serif">3D</text>
    </g>
  ),
  photos: (
    <g>
      <circle cx="68" cy="77" r="56" fill="url(#phFill)" />
      <g className="isolate">
        {["#f39c37", "#f2df3c", "#c4dc55", "#7cc08a", "#7ab6e8", "#9a8fd0", "#cf8fc0", "#ec6560"].map((c, i) => (
          <rect key={c} x="55" y="29.500" width="26" height="46" rx="13" fill={c} className="mix-blend-multiply" transform={`rotate(${i * 45} 68 77)`} />
        ))}
      </g>
    </g>
  ),
  contacts: (
    <g>
      <path fill="#e8e8e8" d="m96 26 6 0 4 24-8 1Z" /><path fill="#5cb4e4" d="m98 50 8-1 4 21-9 1Z" />
      <path fill="#62cb62" d="m101 71 8-1 3 20-8 1Z" /><path fill="#e8932b" d="m104 91 8-1 6 20-10 1Z" />
      <path fill="#6d4a1e" d="m22 34 70 80 22-2-1 10-76 12q-4 0-4-5Z" />
      <path fill="#b0864c" d="m17.300 26 72-11q6 0 7 5l17 96q0 5-5 6l-73 11q-2 0-2.500-3Z" />
      <path fill="none" stroke="#8f6a36" strokeWidth="1.500" d="m24 26 14 105" />
      <ellipse cx="67" cy="71" rx="27" ry="28.500" fill="none" stroke="#94703b" strokeWidth="2" transform="rotate(-8 67 71)" />
      <ellipse cx="66.500" cy="62" rx="10" ry="11" fill="#94703b" />
      <path fill="#94703b" d="M49 88c5-14 35-18 42-6-6 16-32 22-42 6Z" />
    </g>
  ),
  calendar: (
    <g>
      <path fill="#5e6a74" d="m12.400 41 94.400-14.300L120 116.700 26 132Z" />
      <path fill="#bdc1c2" d="m31 119 81-13 1 8-81 13Z" />
      <path fill="#fafafa" d="m16.800 33.700 83-12 12.200 86.600-80.500 12.400Z" />
      <path fill="#dc5c52" d="m16.800 33.700 83-12 3.800 25.300-83 13Z" />
      <g transform="rotate(-8.500 66 77)" fontFamily="Inter, sans-serif" textAnchor="middle">
        <text x="62" y="48" fontSize="18" fill="#fff">MAY</text>
        <text x="68" y="102" fontSize="51" fontWeight="300" fill="#222" textLength="62">28</text>
      </g>
    </g>
  ),
  reminders: (
    <g>
      <path fill="#111" d="m23 38 90-6 5 84q0 4-6 5l-70 12q-5 1-6-4Z" />
      <path fill="#fafafa" d="M28 30 95 18.500q6-1 7 4L116 110q0 6-5 7l-69 12q-6 1-7-5L21 38q0-7 7-8Z" />
      {[["#4a80f0", 36.5, 49.3], ["#dd5a4c", 39, 69], ["#e8a44a", 42.2, 88.3], ["#5a5f66", 45.4, 108.3]].map(([c, x, y]) => (
        <g key={c}>
          <circle cx={x} cy={y} r="8" fill="#fff" stroke="#c8c8c8" />
          <circle cx={x} cy={y} r="6.800" fill={c} />
          <path stroke="#888" strokeWidth="1.200" d={`M${x + 12} ${y - 2.5}l47-7`} />
        </g>
      ))}
    </g>
  ),
  notes: (
    <g>
      <path fill="#b98d1c" d="m19 33 84-13 16.500 102-85 14Z" />
      <path fill="#fafafa" d="m18.500 31 84-13.300L119 119.300l-84.600 13.700Z" />
      <path fill="url(#noteTop)" d="m18.500 31 84-13.300 2.800 17.600L21 48.500Z" />
      <path stroke="#b5b5b5" strokeWidth="1.500" strokeDasharray="1.500 2" d="m21.500 51 84-13.200" />
      {Array.from({ length: 9 }, (_, i) => <path key={i} stroke="#c9c9c9" strokeWidth="1.200" d={`M${22.5 + i * 1.4} ${58 + i * 8.3}l83.500-13.200`} />)}
    </g>
  ),
  music: (
    <g>
      <circle cx="68" cy="77" r="56" fill="url(#muRing)" />
      <circle cx="68" cy="77" r="51" fill="url(#phFill)" />
      <path fill="url(#muNote)" d="M55 47.500q0-2 2-2.500l34-5q2 0 2 2V93c0 7-4 10.500-9.500 10.500S74 100 74 95.500c0-5 4-9 9-9.500 4-.5 5-1.500 5-4V58l-28 5v38c0 7-4.500 10-9.500 10s-12-3-12-8c0-5 4-9 9-9.500 5-.7 7.500-1.500 7.500-5Z" />
    </g>
  ),
  appstore: (
    <g>
      <circle cx="68" cy="77" r="56" fill="url(#asRing)" />
      <circle cx="68" cy="77" r="51" fill="url(#asFill)" />
      <g stroke="#f2f7fc" strokeWidth="8.500" strokeLinecap="round">
        <path d="M73.500 44.500 53 84M45.500 96.500l-2 3.500M36 85h44M94 85h7M63.500 44.500l6 11M70 64l24.500 38" />
      </g>
    </g>
  ),
  settings: (
    <g>
      <rect x="13" y="25" width="110" height="104" rx="4" fill="url(#setFill)" />
      <circle cx="68" cy="77" r="45" fill="#3a3938" stroke="#dfe5e8" strokeWidth="1" />
      <circle cx="68" cy="77" r="37" fill="none" stroke="#b9b5b1" strokeWidth="7" strokeDasharray="4.500 3.250" />
      <circle cx="68" cy="77" r="31.500" fill="#55524f" stroke="#bcb8b4" strokeWidth="5" />
      <path stroke="#c3bfbb" strokeWidth="6.500" d="M68 77h31M68 77 53 49M68 77l-15 28" />
      <circle cx="68" cy="77" r="6" fill="#9a9692" stroke="#d5d2cf" />
    </g>
  ),
  firefox: (
    <g>
      <path fill="url(#ffBody)" d="M33 36c-3 4-5 9-6 15C17 61 12 73 12.500 84 13 112 38 133 68 133c31 0 56-23 56.500-54 .3-15-4-30-14-38l1 8C105 40 87 30 84 17 73 25 66 36 66.500 50L49 52l-1-13-8 9Z" />
      <path fill="url(#ffYellow)" d="M84 17c-11 8-18 19-18 33 8-2 22 2 26 14 8 22-6 47-28 49 24 9 58-7 60-38 .5-13-4-27-13-34l1 9C105 40 87 32 84 17Z" />
      <ellipse cx="68" cy="75" rx="25" ry="28" fill="url(#ffGlobe)" />
      <path fill="#ff9640" d="M27 63c8-5 19-3 25 3 5 2 11 0 15 2-1 5-9 8-15 9-7 2-6 8-8 13-14-4-18-16-17-27Z" />
      <path fill="none" stroke="#ffa436" strokeWidth="6" d="M81 60c10 5 15 16 11 31" strokeLinecap="round" />
    </g>
  ),
  folder: (
    <g>
      <path fill="#4f87a8" d="M14 45q0-4 4-4h26q3 0 4 3l4 5.500h66q4 0 4 4V80H14Z" />
      <path fill="url(#folderFront)" d="M14 57q0-3 3-3h102q3 0 3 3v65q0 4-4 4H18q-4 0-4-4Z" />
      <path stroke="#4f8bb3" strokeOpacity=".6" d="M15 115h107M15 119h107M15 123h107" />
    </g>
  ),
  thumbnail: (
    <g>
      <rect x="8" y="37" width="120" height="80" fill="#1e1f20" />
      <path fill="#3b3b3d" d="M8 37h120v7H8z" /><path fill="#2c2d2f" d="M8 44h23v73H8z" />
      <circle cx="10.500" cy="39" r="1" fill="#ee6a5f" /><circle cx="13.500" cy="39" r="1" fill="#f5bf4f" /><circle cx="16.500" cy="39" r="1" fill="#62c655" />
      <path fill="#6f6f71" d="M32 40.500h12v2.500H32zM46 40.500h5v2.500h-5zM53 40.500h4v2.500h-4zM90 40.500h36v2.500H90z" />
      {[0, 1, 2, 3, 4, 5, 6].map((i) => <g key={i}><rect x={35 + i * 13.6} y="46" width="7" height="5" fill={i < 2 ? "#ddd" : "#7d6e60"} /><rect x={33.5 + i * 13.6} y="53" width="10" height="1.500" fill="#6a6a6a" /></g>)}
      {[0, 1, 2].map((i) => <g key={i}><rect x={36 + i * 13.6} y="59" width="5" height="5.500" fill="#bbb" /><rect x={34 + i * 13.6} y="66.500" width="9" height="1.500" fill="#6a6a6a" /></g>)}
      {Array.from({ length: 18 }, (_, i) => <rect key={i} x="11" y={46 + i * 3.4} width={i % 3 ? 10 : 7} height="1.300" fill="#808080" />)}
      <g transform="translate(80 86.500) scale(.385 .370)"><FinderFace /></g>
    </g>
  ),
  trash: (
    <g>
      <path fill="url(#trashBody)" d="M22 33 35 126q2 7 33 7.500 31-.5 33.500-7.500L113.500 33q-2 9-45.500 9.500Q24 42 22 33Z" />
      <ellipse cx="68" cy="32" rx="45.700" ry="11" fill="#55585a" stroke="#a9adaf" strokeWidth="1.500" />
      <path fill="#dcdcdc" d="m29 22 14-4 7-2 8 6 14-1 6-5 10 5 12 3 6 9-12 8-20 2-30-1-12-10Z" />
      <path fill="#8a8c8e" d="m34 24 12-5 4 12-8 8ZM62 23l9 2-4 14-9-3ZM92 24l8 3-5 12-9 1Z" />
      <path fill="#4bb3e0" d="m54 30 8-4 5 6-8 3Z" /><path fill="#58c06a" d="m52 33 7 2-3 5Z" />
      <path fill="#3a3f55" d="m76 26 9-7 4 14-9 8Z" /><path fill="#b8683c" d="m72 29 7 1 1 9-7-1Z" />
      <path fill="none" stroke="#c4c7c9" strokeWidth="1.500" d="M22.500 33c3 6 20 9.500 45.500 9.500s43-3.500 45.500-9.500" />
    </g>
  ),
};

function AdobeIcon({ text, border, fill, color, rx, x, w }) {
  return (
    <g>
      <rect x="8" y="15" width="120" height="117" rx={rx} fill={border} />
      <rect x="13" y="20" width="110" height="107" rx={rx ? rx - 6 : 0} fill={fill} />
      <text x={x} y="97" fontSize="76" fontWeight="600" fontFamily="'Open Sans', sans-serif" fill={color} textLength={w} lengthAdjust="spacingAndGlyphs">{text}</text>
    </g>
  );
}

function Slot({ children, running }) {
  return (
    <svg viewBox="0 0 136 161" className="h-[161px] w-[136px] shrink-0">
      {children}
      {running && <circle cx="68" cy="153" r="4" fill="#a9b0bd" />}
    </svg>
  );
}

function Dock() {
  return (
    <footer className="relative -mt-px flex h-[161px] shrink-0 justify-center overflow-visible">
      <svg className="absolute size-0">
        <defs>
          <Grad id="finderL" stops={["#5ed0fa", "#3d9df2", "#2f66ea"]} />
          <Grad id="finderR" stops={["#f7f7f9", "#dde6f0"]} />
          <Grad id="lpRing" stops={["#e6f5fa", "#8c8e8f"]} />
          <Grad id="lpFill" stops={["#cddce2", "#a9b0b2", "#757575"]} />
          <radialGradient id="sfFill"><stop offset="0" stopColor="#55c3e6" /><stop offset="1" stopColor="#2267e0" /></radialGradient>
          <Grad id="mailSky" stops={["#3a7fdc", "#8fc1ee"]} />
          <Grad id="phFill" stops={["#ffffff", "#dcdee2"]} />
          <Grad id="noteTop" stops={["#fbdf6e", "#f4c634"]} />
          <Grad id="muRing" stops={["#f2f3f4", "#b4b8bc"]} />
          <Grad id="muNote" stops={["#ee5f6c", "#c05fd8", "#5aa8fa"]} x2={0.5} />
          <Grad id="asRing" stops={["#4fb8f6", "#1238c0"]} />
          <Grad id="asFill" stops={["#55c0f8", "#2a62ea"]} />
          <Grad id="setFill" stops={["#d3e0e6", "#a5a9ab", "#727272"]} />
          <Grad id="ffBody" stops={["#ffb93c", "#ff6a3c", "#f5405a", "#c82a7a"]} />
          <Grad id="ffYellow" stops={["#fff36b", "#ffcf3c", "#ff7c34"]} />
          <Grad id="ffGlobe" stops={["#b04be0", "#7a5cf0", "#3f3aa0"]} />
          <Grad id="folderFront" stops={["#66abd8", "#7db7d8", "#68a6cc"]} />
          <Grad id="trashBody" stops={["#6c7072", "#9ca0a2", "#5f6466", "#8e9294", "#4c5052"]} x2={1} y2={0.15} />
        </defs>
      </svg>
      <div className="flex h-full rounded-t-[12px] border-x-2 border-t-3 border-[#454c59] bg-[#192031] px-[6px] shadow-[0_0_40px_rgba(0,0,0,0.25)]">
        <div className="-mt-[3px] flex">
          <Slot running>{dockIcons.finder}</Slot>
          <Slot>{dockIcons.launchpad}</Slot>
          <Slot>{dockIcons.safari}</Slot>
          <Slot>{dockIcons.mail}</Slot>
          <Slot>{dockIcons.maps}</Slot>
          <Slot>{dockIcons.photos}</Slot>
          <Slot>{dockIcons.contacts}</Slot>
          <Slot>{dockIcons.calendar}</Slot>
          <Slot>{dockIcons.reminders}</Slot>
          <Slot>{dockIcons.notes}</Slot>
          <Slot>{dockIcons.music}</Slot>
          <Slot>{dockIcons.appstore}</Slot>
          <Slot>{dockIcons.settings}</Slot>
          <Slot><AdobeIcon text="Ps" border="#5ccbff" fill="#11262f" color="#e6f6ff" rx={18} x={33} w={70} /></Slot>
          <Slot><AdobeIcon text="Lr" border="#c6def2" fill="#183340" color="#c6def2" rx={0} x={34} w={68} /></Slot>
          <Slot><AdobeIcon text="Ai" border="#f79434" fill="#301a05" color="#f79434" rx={0} x={36} w={65} /></Slot>
          <Slot running>{dockIcons.firefox}</Slot>
          <Slot running><AdobeIcon text="Xd" border="#f03fb5" fill="#290219" color="#f9dcf3" rx={18} x={30} w={78} /></Slot>
          <div className="flex w-[60px] justify-center pt-[21px]"><i className="h-[120px] w-[2px] bg-[#565d6b]" /></div>
          <Slot>{dockIcons.folder}</Slot>
          <Slot>{dockIcons.thumbnail}</Slot>
          <Slot>{dockIcons.trash}</Slot>
        </div>
      </div>
    </footer>
  );
}

export default function App() {
  return (
    <div className="flex h-[2880px] w-[5120px] flex-col overflow-hidden bg-linear-to-b from-[#0c1830] from-5% to-[#050e1a] font-['Inter',sans-serif] [zoom:0.8]">
      <MenuBar />
      <div className="flex h-[2674px] shrink-0 flex-col overflow-hidden rounded-[10px] bg-[#f7f7f7]">
        <TitleBar />
        <div className="flex min-h-0 flex-1">
          <ToolBar />
          <Canvas />
          <Inspector />
        </div>
      </div>
      <Dock />
    </div>
  );
}
